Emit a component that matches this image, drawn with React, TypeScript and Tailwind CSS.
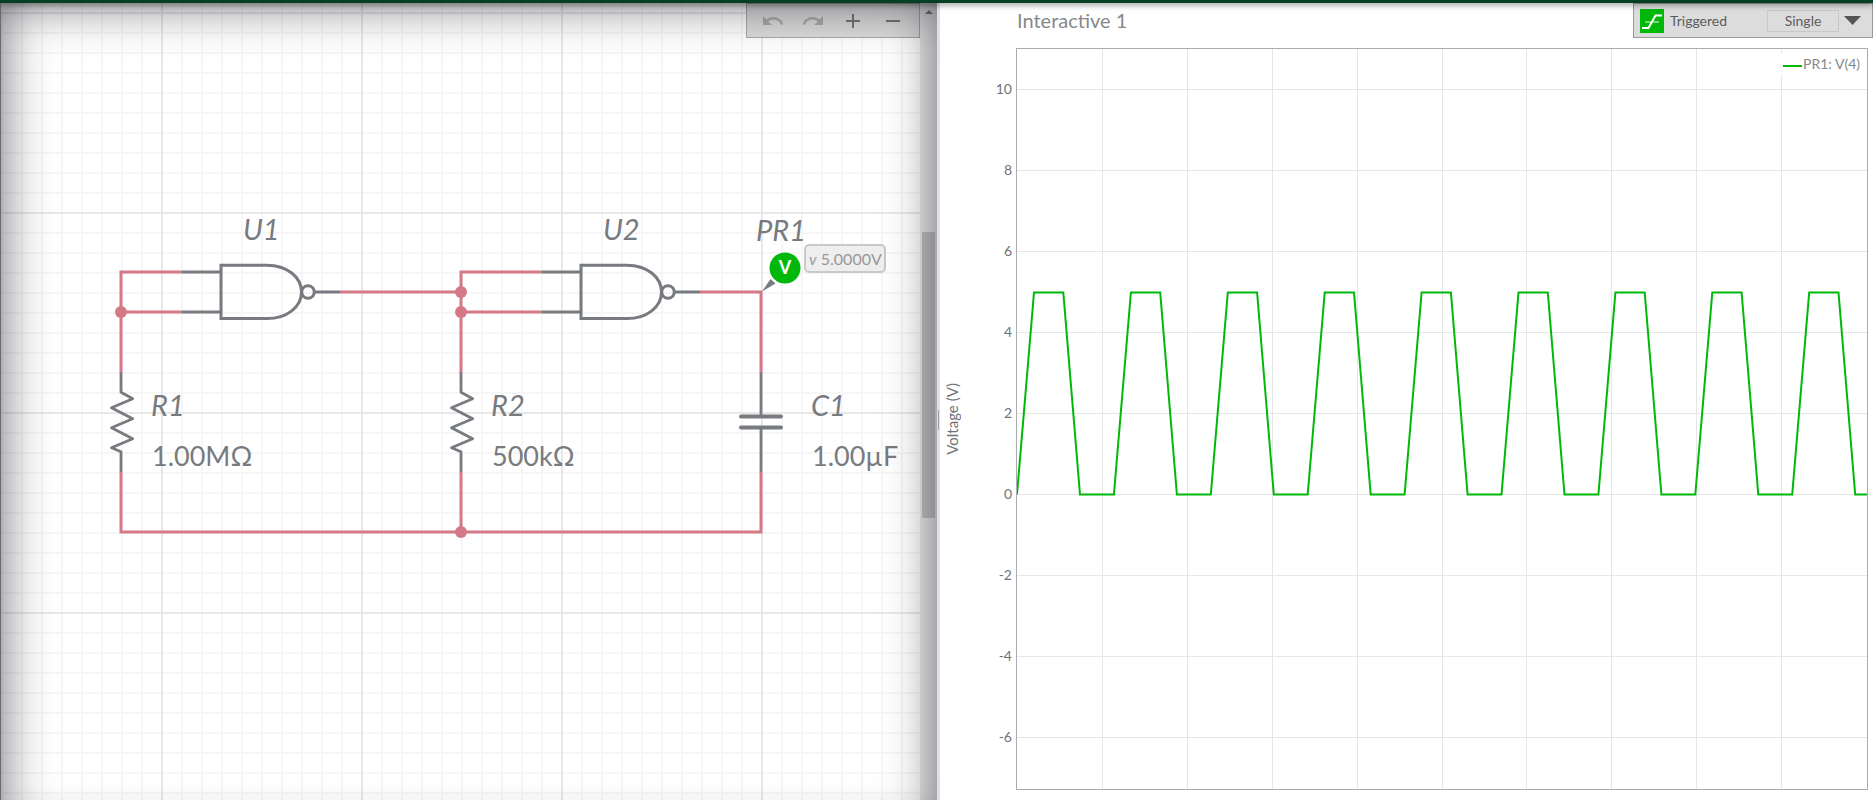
import React from "react";
import { MdAdd, MdRedo, MdRemove, MdUndo } from "react-icons/md";

const WIRE = "#d47985";
const PART = "#777b80";
const TRACE = "#00b80a";

const gridColumns = Array.from({ length: 9 }, (_, i) => Math.round(84.9 * (i + 1)) + 1);
const voltages = [10, 8, 6, 4, 2, 0, -2, -4, -6];

const PERIOD = 96.9;
const wave = Array.from({ length: 9 }, (_, i) => {
  const x = i * PERIOD;
  return `${x},446.5 ${x + 17},244.5 ${x + 46.3},244.5 ${x + 63},446.5`;
}).join(" ");

function NandGate({ x }: { x: number }) {
  return (
    <g transform={`translate(${x} 0)`} fill="none" stroke={PART} strokeWidth="3">
      <path d="M-39 272H0M-39 312H0M94 292h25" />
      <path d="M0 265.2h46c20 0 34.500 12 34.500 26.800S66 318.600 46 318.600H0z" />
      <circle cx="87" cy="292" r="6.300" />
    </g>
  );
}

function Resistor({ x }: { x: number }) {
  return (
    <path
      transform={`translate(${x} 0)`}
      d="M0 372v20.300l11.700 6.400-21.200 9 21.200 11-21.200 9 21.200 11-21.200 9 9.500 4V472"
      fill="none"
      stroke={PART}
      strokeWidth="2.800"
      strokeLinejoin="round"
    />
  );
}

function Schematic() {
  return (
    <svg className="block h-full w-full" role="img" aria-label="Oscillator schematic">
      <defs>
        <pattern id="minor" width="20" height="20" patternUnits="userSpaceOnUse" x="1" y="12">
          <path d="M0 0h20v2H2v18H0z" fill="#f6f6f6" />
        </pattern>
        <pattern id="major" width="200" height="200" patternUnits="userSpaceOnUse" x="161" y="12">
          <path d="M0 0h200v2H2v198H0z" fill="#e8e8e8" />
        </pattern>
      </defs>
      <g transform="translate(-1 -3)">
        <rect width="3000" height="2000" fill="url(#minor)" />
        <rect width="3000" height="2000" fill="url(#major)" />

        <NandGate x={221} />
        <NandGate x={581} />
        <Resistor x={121} />
        <Resistor x={461} />
        <path d="M761 372v44M761 428v44" stroke={PART} strokeWidth="2.800" />
        <path d="M741 416.500h40M741 427.600h40" stroke={PART} strokeWidth="4" strokeLinecap="round" />

        <g fill="none" stroke={WIRE} strokeWidth="3">
          <path d="M182 272H121V372.500M121 312h61" />
          <path d="M340 292H461M542 272H461V372.500M461 312h81" />
          <path d="M700 292h61v80.500" />
          <path d="M121 471.500V532H761V471.500M461 471.500V532" />
        </g>
        <g fill={WIRE}>
          <circle cx="121" cy="312" r="6" />
          <circle cx="461" cy="292" r="6" />
          <circle cx="461" cy="312" r="6" />
          <circle cx="461" cy="532" r="6" />
        </g>

        <path d="M762 291.500l8.500-12.500 5 4.500z" fill={PART} />
        <circle cx="785" cy="268" r="15.500" fill={TRACE} />

        <g className="font-['Lato',sans-serif] text-[29px] italic" fill={PART}>
          <text x="243" y="240">U1</text>
          <text x="603" y="240">U2</text>
          <text x="756" y="241">PR1</text>
          <text x="151" y="416">R1</text>
          <text x="491" y="416">R2</text>
          <text x="811" y="416">C1</text>
        </g>
        <g className="font-['Lato',sans-serif] text-[27px]" fill={PART}>
          <text x="152" y="466">1.00MΩ</text>
          <text x="492" y="466">500kΩ</text>
          <text x="812" y="466">1.00µF</text>
        </g>
        <text x="785" y="274" textAnchor="middle" fill="#fff" className="font-['Lato',sans-serif] text-[18px] font-bold">
          V
        </text>

        <rect x="805" y="245" width="80" height="27" rx="4" fill="#eeeeee" stroke="#c9c9c9" strokeWidth="2" />
        <text x="809" y="265" fill="#96989b" className="font-['Lato',sans-serif] text-[16px]">
          <tspan fontStyle="italic">v</tspan> 5.0000V
        </text>
      </g>
    </svg>
  );
}

function ToolButton({ label, disabled, children }: { label: string; disabled?: boolean; children: React.ReactNode }) {
  return (
    <button
      type="button"
      aria-label={label}
      disabled={disabled}
      className="flex h-full w-10 items-center justify-center text-[#757575] disabled:text-[#ababab]"
    >
      {children}
    </button>
  );
}

function SchematicPane() {
  return (
    <section className="relative flex min-w-0 overflow-hidden border-l border-[#6b6b6d] bg-white">
      <div className="relative min-w-0 flex-1">
        <Schematic />
        <div className="absolute right-0 top-0 flex h-[35px] border border-[#a9a9a9] bg-[#dcdcdc] px-[6px]">
          <ToolButton label="Undo" disabled>
            <MdUndo size={24} />
          </ToolButton>
          <ToolButton label="Redo" disabled>
            <MdRedo size={24} />
          </ToolButton>
          <ToolButton label="Zoom in">
            <MdAdd size={24} />
          </ToolButton>
          <ToolButton label="Zoom out">
            <MdRemove size={24} />
          </ToolButton>
        </div>
      </div>
      <div className="flex w-[17px] shrink-0 flex-col items-center bg-[#ebebeb]">
        <svg className="mt-[7px] h-1 w-2" viewBox="0 0 8 4" aria-hidden="true">
          <path d="M0 4l4-4 4 4z" fill="#7a7a7a" />
        </svg>
        <div className="mt-[218px] h-[286px] w-[13px] bg-[#c3c3c3]" />
      </div>
      <div className="pointer-events-none absolute inset-x-0 -bottom-9 top-0 shadow-[inset_0_0_50px_rgba(18,20,28,0.62)]" />
    </section>
  );
}

function GrapherPane() {
  return (
    <section className="flex min-w-0 flex-col bg-white font-['Lato',sans-serif] text-[#6f7378]">
      <header className="flex h-[45px] items-start justify-between pl-[77px]">
        <h1 className="text-[20px] leading-[34px] text-[#85888c]">Interactive 1</h1>
        <div className="flex h-[35px] w-[240px] items-center border border-[#999999] bg-[#dcdcdc] pl-[6px] pr-[11px] text-[14px] text-[#5c5c5c]">
          <svg className="h-6 w-6" viewBox="0 0 24 24" aria-hidden="true">
            <rect width="24" height="24" fill={TRACE} />
            <path d="M5 13h14" stroke="#9be29f" strokeWidth="1.500" />
            <path d="M2 19h6.500L15.500 6.500H22" fill="none" stroke="#fff" strokeWidth="2" />
          </svg>
          <span className="ml-[6px]">Triggered</span>
          <button type="button" className="ml-auto h-[22px] w-[72px] border border-[#c8c8c8] leading-[20px]">
            Single
          </button>
          <button type="button" aria-label="More run modes" className="ml-[5px] flex h-6 w-[17px] items-center">
            <svg className="h-[9px] w-[17px]" viewBox="0 0 17 9" aria-hidden="true">
              <path d="M0 0h17L8.500 9z" fill="#555555" />
            </svg>
          </button>
        </div>
      </header>
      <div className="flex min-h-0 flex-1 pb-[10px] pr-[5px]">
        <div className="flex w-6 items-center justify-center">
          <span className="rotate-180 whitespace-nowrap text-[15px] leading-[24px] [writing-mode:vertical-rl]">
            Voltage (V)
          </span>
        </div>
        <div className="w-[52px] overflow-hidden pr-1 text-right text-[14px] leading-[81px]">
          {voltages.map((v) => (
            <div key={v}>{v}</div>
          ))}
        </div>
        <div className="relative min-w-0 flex-1 border border-[#acacac]">
          <svg
            className="block h-full w-full"
            viewBox="0 0 850 740"
            preserveAspectRatio="none"
            role="img"
            aria-label="Voltage over time"
          >
            <g transform="translate(-1 -1)">
              <g fill="#e6e6e6">
                {gridColumns.map((x) => (
                  <rect key={x} x={x} y="0" width="1" height="742" />
                ))}
                {voltages.map((v, i) => (
                  <rect key={v} x="0" y={41 + i * 81} width="852" height="1" />
                ))}
              </g>
              <polyline
                points={`${wave} 860,446.5`}
                transform="translate(1 0)"
                fill="none"
                stroke={TRACE}
                strokeWidth="2"
              />
            </g>
          </svg>
          <div className="absolute right-1 top-1 flex h-[22px] items-center bg-white px-[3px] text-[14px] leading-[18px] text-[#85888c]">
            <span className="mr-px mt-1 h-[2px] w-[19px] bg-[#00b80a]" />
            <span>PR1: V(4)</span>
          </div>
        </div>
      </div>
    </section>
  );
}

export default function App() {
  return (
    <div className="flex h-screen flex-col overflow-hidden bg-white">
      <div className="relative z-10 h-[3px] shrink-0 bg-[#034023] shadow-[0_1px_6px_rgba(0,0,0,0.7)]" />
      <main className="grid min-h-0 flex-1 grid-cols-[937fr_3px_933fr] grid-rows-1">
        <SchematicPane />
        <div className="flex items-center justify-center bg-[#dce1e5]">
          <div className="mt-9 h-5 w-px bg-[#9ba0a5]" />
        </div>
        <GrapherPane />
      </main>
    </div>
  );
}
